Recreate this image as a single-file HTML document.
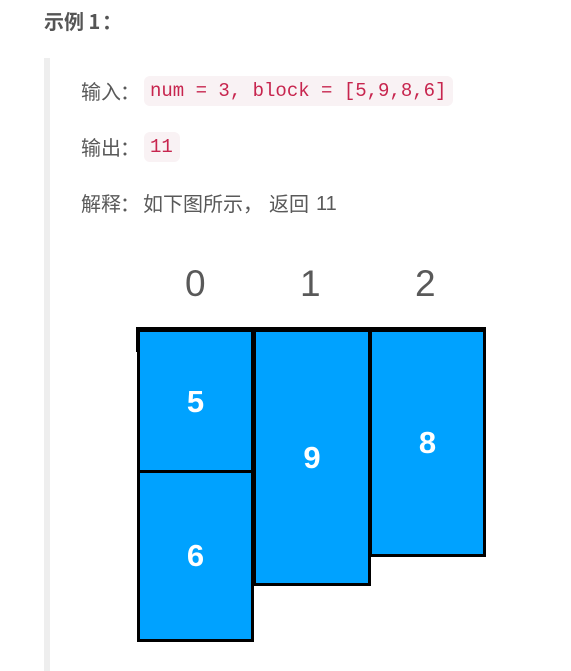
<!DOCTYPE html>
<html><head><meta charset="utf-8"><style>
body{margin:0;width:571px;height:671px;background:#fff;position:relative;overflow:hidden;font-family:"Liberation Sans","Noto Sans CJK SC",sans-serif;color:#595959}
.a{position:absolute;white-space:nowrap}
.t{font-family:"Noto Sans CJK SC",sans-serif;font-size:20px;line-height:24px}
.c{font-family:"Liberation Mono","Noto Sans CJK SC",monospace;color:#c7254e;background:#f9f2f4;border-radius:6px;font-size:19px;line-height:30px;padding:0 7px 0 6px}
.b{position:absolute;background:#00a2ff;border:3px solid #000;box-sizing:border-box;color:#fff;font-weight:bold;font-size:31px;display:flex;align-items:center;justify-content:center}
.n{position:absolute;font-size:37px;color:#595959;line-height:37px}
</style></head><body>
<div class="a" style="left:44px;top:8px;font-family:'Noto Sans CJK SC',sans-serif;font-size:20px;font-weight:bold;color:#555;line-height:26px">示例 1</div>
<div class="a" style="left:102px;top:8px;font-family:'Noto Sans CJK SC',sans-serif;font-size:20px;font-weight:bold;color:#555;line-height:26px">：</div>
<div class="a" style="left:44px;top:58px;width:6px;height:613px;background:#eeeeee"></div>
<div class="a t" style="left:81px;top:79px">输入</div><div class="a t" style="left:120px;top:79px">：</div>
<div class="a c" style="left:144px;top:76px">num = 3, block = [5,9,8,6]</div>
<div class="a t" style="left:81px;top:135px">输出</div><div class="a t" style="left:120px;top:135px">：</div>
<div class="a c" style="left:144px;top:132px">11</div>
<div class="a t" style="left:81px;top:191px">解释</div><div class="a t" style="left:120px;top:191px">：</div>
<div class="a t" style="left:143px;top:191px">如下图所示</div>
<div class="a t" style="left:243px;top:191px">，</div>
<div class="a t" style="left:269px;top:191px">返回</div>
<div class="a" style="left:316px;top:192px;font-size:20px;line-height:24px">11</div>
<div class="n" style="left:185px;top:265px">0</div>
<div class="n" style="left:300px;top:265px">1</div>
<div class="n" style="left:415px;top:265px">2</div>
<div class="a" style="left:136px;top:327px;width:350px;height:4px;background:#000"></div>
<div class="a" style="left:136px;top:327px;width:3px;height:25px;background:#000"></div>
<div class="a" style="left:483px;top:327px;width:3px;height:25px;background:#000"></div>
<div class="b" style="left:137px;top:329px;width:117px;height:145px">5</div>
<div class="b" style="left:137px;top:470px;width:117px;height:172px">6</div>
<div class="b" style="left:253px;top:329px;width:118px;height:257px">9</div>
<div class="b" style="left:369px;top:329px;width:117px;height:228px">8</div>
</body></html>
